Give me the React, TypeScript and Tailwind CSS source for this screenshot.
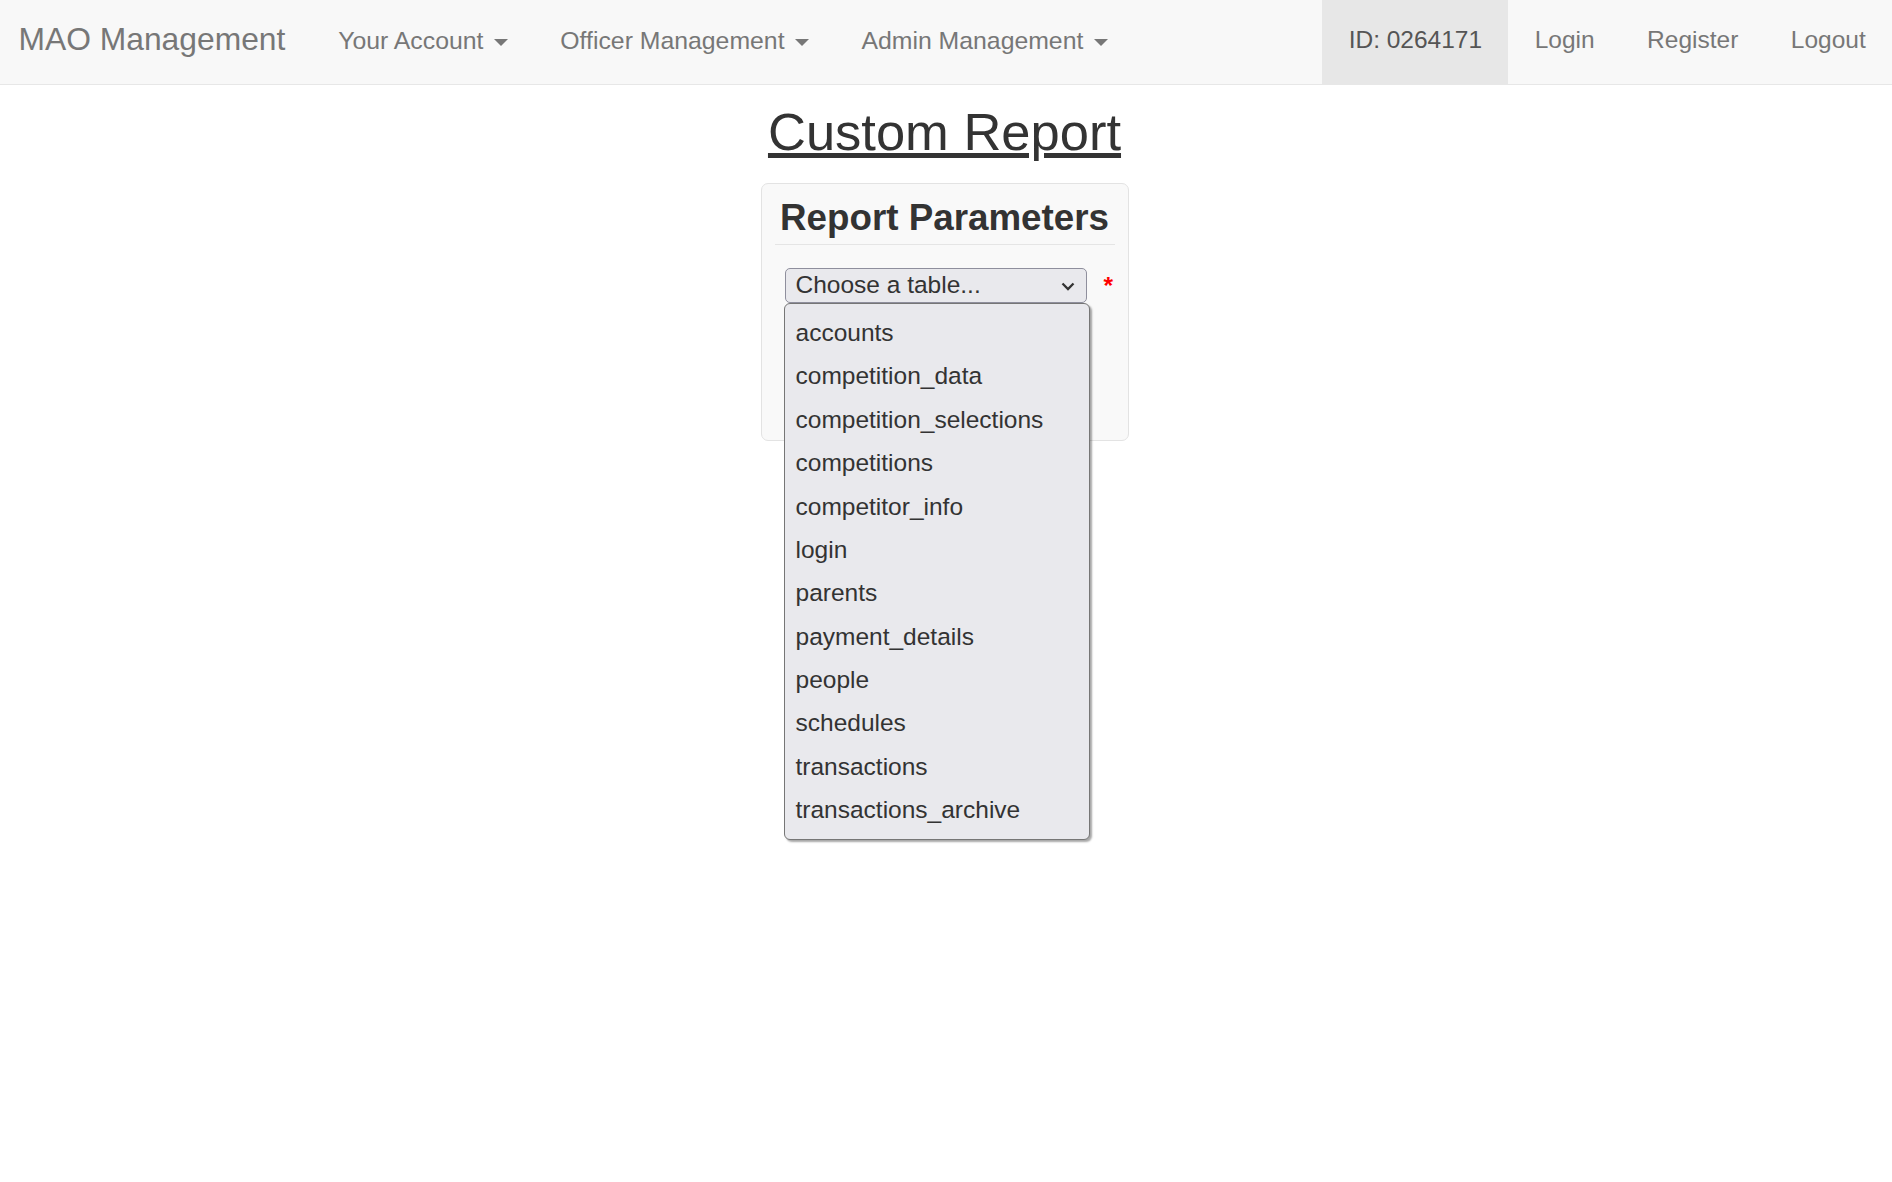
import React from "react";

const tables = [
    "accounts",
    "competition_data",
    "competition_selections",
    "competitions",
    "competitor_info",
    "login",
    "parents",
    "payment_details",
    "people",
    "schedules",
    "transactions",
    "transactions_archive",
];

function Caret() {
    return (
        <span className="inline-block w-0 h-0 ml-[3.5px] align-middle border-t-[7px] border-x-[7px] border-x-transparent border-t-[#777]" />
    );
}

function NavLink({ label, dropdown }: { label: string; dropdown?: boolean }) {
    return (
        <div className={`flex items-center px-[26.25px] pb-[3px] text-[#777] whitespace-nowrap ${dropdown ? "text-[24.8px]" : "text-[24.5px]"}`}>
            <span>
                {label}
                {dropdown && (
                    <>
                        {" "}
                        <Caret />
                    </>
                )}
            </span>
        </div>
    );
}

export default function App() {
    return (
        <div className="min-h-screen bg-white text-[#333] font-['Liberation_Sans',Arial,sans-serif]">
            {/* Navbar */}
            <nav className="h-[85px] flex bg-[#f8f8f8] border-b border-[#e7e7e7]">
                <div className="flex items-center pl-[18.5px] pr-[26.6px] pb-[4px] text-[31.8px] text-[#777] whitespace-nowrap">
                    MAO Management
                </div>
                <NavLink label="Your Account" dropdown />
                <NavLink label="Officer Management" dropdown />
                <NavLink label="Admin Management" dropdown />

                <div className="ml-auto flex">
                    <div className="flex items-center px-[26.25px] pb-[3px] bg-[#e7e7e7] text-[24.5px] text-[#555]">
                        ID: 0264171
                    </div>
                    <NavLink label="Login" />
                    <NavLink label="Register" />
                    <NavLink label="Logout" />
                </div>
            </nav>

            {/* Page body */}
            <main className="pr-[3px] flex flex-col items-center">
                <h1 className="mt-[18px] text-[52.5px] leading-[1.1] underline">Custom Report</h1>

                <div className="mt-[22px] w-[368px] border border-[#e3e3e3] rounded-[7px] bg-[#f9f9f9] px-[13px] pt-[13.8px] pb-[137px]">
                    <h2 className="text-[36.75px] leading-[1.1] font-bold text-center">Report Parameters</h2>
                    <div className="mt-[6px] border-t border-[#e5e5e5]" />

                    <div className="mt-[23px] pl-[10px] flex items-start">
                        <div className="relative w-[302px] h-[35px] flex items-center pl-[10px] border border-[#8f8f9d] rounded-[5px] bg-[#e9e9ed] text-[24.5px]">
                            <span className="flex-1">Choose a table...</span>
                            <svg width="14" height="9" viewBox="0 0 14 9" className="mr-[11px] mt-[3px]">
                                <polyline points="1.5,1.5 7,7 12.5,1.5" fill="none" stroke="#333" strokeWidth="2.3" />
                            </svg>

                            {/* Open option list */}
                            <div className="absolute left-[-2px] top-[34px] z-10 w-[306px] py-[7px] border border-[#767676] rounded-[6px] bg-[#e9e9ed] shadow-[2px_2px_2px_rgba(0,0,0,0.35)]">
                                {tables.map((t) => (
                                    <div key={t} className="h-[43.4px] py-[7px] px-[11px] leading-[29.4px] text-[24.5px] text-[#333]">
                                        {t}
                                    </div>
                                ))}
                            </div>
                        </div>
                        <span className="ml-[17px] leading-[35px] text-[24.5px] font-bold text-[#f00]">*</span>
                    </div>
                </div>
            </main>
        </div>
    );
}
